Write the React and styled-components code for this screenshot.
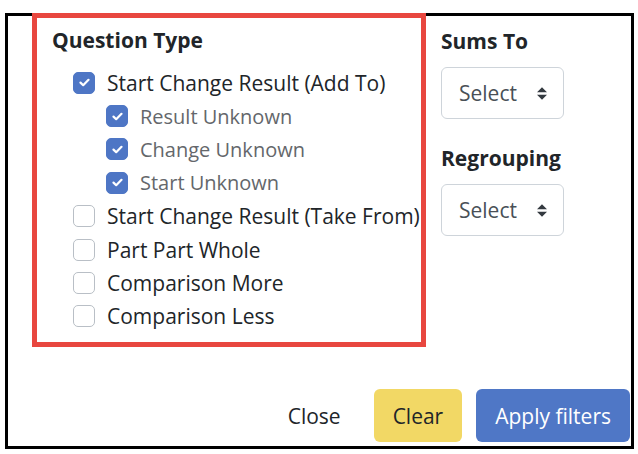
import React from "react";
import styled, { createGlobalStyle } from "styled-components";

const GlobalStyle = createGlobalStyle`
  html, body {
    margin: 0;
    padding: 0;
    background: #ffffff;
  }
  body {
    font-family: "Open Sans", "Noto Sans", sans-serif;
    color: #212529;
  }
`;

const Page = styled.div`
  padding: 13px 0 0 5px;
`;

const Frame = styled.div`
  box-sizing: border-box;
  width: 629px;
  height: 436px;
  border: 3px solid #000;
  display: flex;
  flex-direction: column;
`;

const Body = styled.div`
  flex: 1;
  display: flex;
  align-items: flex-start;
`;

const Highlight = styled.div`
  box-sizing: border-box;
  width: 394px;
  height: 334px;
  margin: -3px 0 0 24px;
  border: 5px solid #e8473f;
  padding: 9px 0 0 15px;
`;

const Heading = styled.h3`
  margin: 0;
  font-size: 21px;
  font-weight: 700;
  line-height: 26px;
  color: #212529;
`;

const List = styled.div`
  margin-top: 13px;
`;

const Row = styled.label`
  display: flex;
  align-items: center;
  height: 33.4px;
  padding-left: ${(p) => (p.$nested ? 54 : 21)}px;
  font-size: ${(p) => (p.$nested ? 20 : 21)}px;
  color: ${(p) => (p.$nested ? "#64676b" : "#212529")};
  white-space: nowrap;
`;

const Box = styled.span`
  box-sizing: border-box;
  flex: none;
  width: 22px;
  height: 22px;
  margin-right: 12px;
  border-radius: 5px;
  display: flex;
  align-items: center;
  justify-content: center;
  background: ${(p) => (p.$checked ? "#4e76c5" : "#fff")};
  border: 1px solid ${(p) => (p.$checked ? "#4e76c5" : "#b9bfc6")};
`;

const Side = styled.div`
  margin: 12px 0 0 15px;
  display: flex;
  flex-direction: column;
`;

const Field = styled.div`
  margin-bottom: 26px;
`;

const Label = styled.div`
  font-size: 21px;
  font-weight: 700;
  line-height: 26px;
  margin-bottom: 13px;
`;

const SelectBox = styled.div`
  box-sizing: border-box;
  width: 123px;
  height: 52px;
  border: 1px solid #ced4da;
  border-radius: 6px;
  display: flex;
  align-items: center;
  justify-content: space-between;
  padding: 0 16px 0 17px;
  font-size: 21px;
  color: #495057;
`;

const Footer = styled.div`
  display: flex;
  justify-content: flex-end;
  align-items: center;
  gap: 14px;
  padding: 0 1px 4px 0;
`;

const Button = styled.button`
  box-sizing: border-box;
  height: 53px;
  padding: 0 ${(p) => (p.$variant === "primary" ? 19 : 19)}px;
  border: none;
  border-radius: 6px;
  font-family: inherit;
  font-size: 21px;
  cursor: pointer;
  background: ${(p) =>
    p.$variant === "primary" ? "#4f77c6" : p.$variant === "warning" ? "#f2d865" : "transparent"};
  color: ${(p) => (p.$variant === "primary" ? "#fff" : "#212529")};
`;

const Check = () => (
  <svg width="11" height="9" viewBox="0 0 11 9">
    <path d="M1.5 4.6L4.2 7.2L9.5 1.8" fill="none" stroke="#fff" strokeWidth="2.2" strokeLinecap="round" strokeLinejoin="round" />
  </svg>
);

const Arrows = () => (
  <svg width="10" height="13" viewBox="0 0 4 5">
    <path d="M2 0L0 2h4zm0 5L0 3h4z" fill="#343a40" />
  </svg>
);

const items = [
  { label: "Start Change Result (Add To)", checked: true },
  { label: "Result Unknown", checked: true, nested: true },
  { label: "Change Unknown", checked: true, nested: true },
  { label: "Start Unknown", checked: true, nested: true },
  { label: "Start Change Result (Take From)" },
  { label: "Part Part Whole" },
  { label: "Comparison More" },
  { label: "Comparison Less" },
];

export default function App() {
  return (
    <Page>
      <GlobalStyle />
      <Frame>
        <Body>
          <Highlight>
            <Heading>Question Type</Heading>
            <List>
              {items.map((it) => (
                <Row key={it.label} $nested={it.nested}>
                  <Box $checked={it.checked}>{it.checked && <Check />}</Box>
                  {it.label}
                </Row>
              ))}
            </List>
          </Highlight>
          <Side>
            <Field>
              <Label>Sums To</Label>
              <SelectBox>
                Select
                <Arrows />
              </SelectBox>
            </Field>
            <Field>
              <Label>Regrouping</Label>
              <SelectBox>
                Select
                <Arrows />
              </SelectBox>
            </Field>
          </Side>
        </Body>
        <Footer>
          <Button>Close</Button>
          <Button $variant="warning">Clear</Button>
          <Button $variant="primary">Apply filters</Button>
        </Footer>
      </Frame>
    </Page>
  );
}
